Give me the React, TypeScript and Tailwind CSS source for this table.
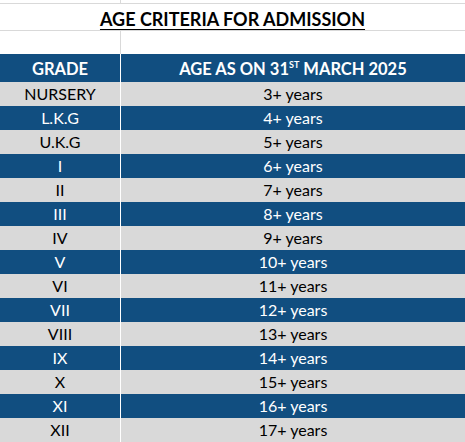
import React from "react";

const rows = [
  ["NURSERY", "3+ years"],
  ["L.K.G", "4+ years"],
  ["U.K.G", "5+ years"],
  ["I", "6+ years"],
  ["II", "7+ years"],
  ["III", "8+ years"],
  ["IV", "9+ years"],
  ["V", "10+ years"],
  ["VI", "11+ years"],
  ["VII", "12+ years"],
  ["VIII", "13+ years"],
  ["IX", "14+ years"],
  ["X", "15+ years"],
  ["XI", "16+ years"],
  ["XII", "17+ years"],
];

export default function App() {
  return (
    <div
      className="w-[465px] h-[442px] overflow-hidden bg-white"
      style={{ fontFamily: "Lato, 'Liberation Sans', sans-serif" }}
    >
      {/* top partial row */}
      <div className="grid grid-cols-[121px_1fr] h-[4px] border-b border-[#d9d9d9]">
        <div className="border-r border-[#d9d9d9]" />
        <div />
      </div>

      {/* title */}
      <div className="h-[27px] border-b border-[#d9d9d9] flex items-center justify-center pt-[3px]">
        <span className="text-[18px] font-bold underline underline-offset-[3px] text-black leading-none">
          AGE CRITERIA FOR ADMISSION
        </span>
      </div>

      {/* empty row */}
      <div className="grid grid-cols-[121px_1fr] h-[23px]">
        <div className="border-r border-[#d9d9d9]" />
        <div />
      </div>

      {/* header */}
      <div className="grid grid-cols-[121px_1fr] h-[28px] bg-[#114e80] text-white font-bold text-[16.5px]">
        <div className="border-r border-white flex items-end justify-center">GRADE</div>
        <div className="flex items-end justify-center">
          <span>
            AGE AS ON 31<span className="text-[9px] relative -top-[7px] align-baseline">ST</span> MARCH 2025
          </span>
        </div>
      </div>

      {rows.map(([grade, age], i) => {
        const blue = i % 2 === 1;
        return (
          <div
            key={grade}
            className={
              "grid grid-cols-[121px_1fr] h-[24px] text-[16px] " +
              (blue ? "bg-[#114e80] text-white" : "bg-[#d9d9d9] text-black")
            }
          >
            <div className="border-r border-white flex items-center justify-center">{grade}</div>
            <div className="flex items-center justify-center">{age}</div>
          </div>
        );
      })}
    </div>
  );
}
